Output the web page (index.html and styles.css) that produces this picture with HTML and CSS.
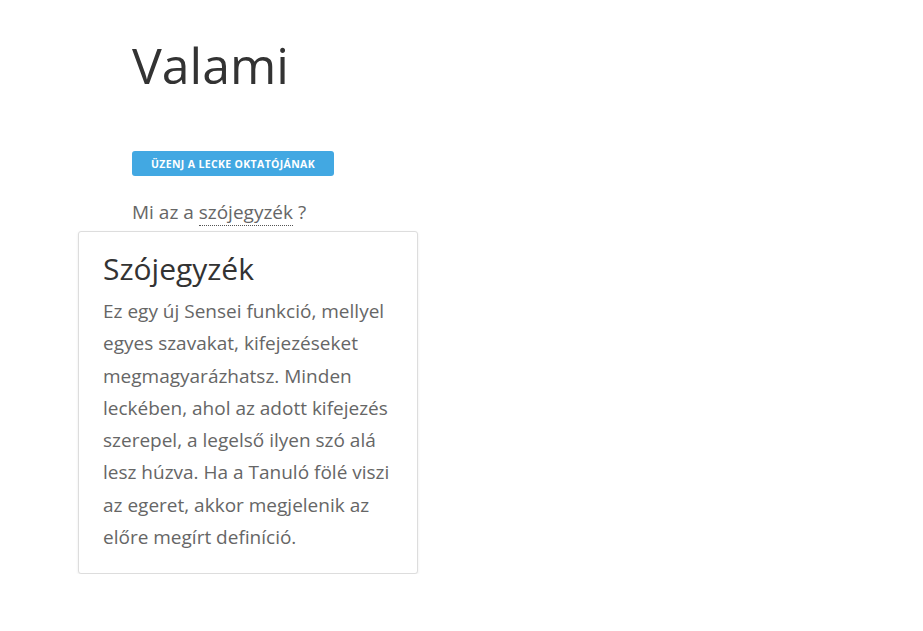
FILE: index.html
```html
<!DOCTYPE html>
<html lang="hu">
<head>
<meta charset="utf-8">
<link rel="stylesheet" href="styles.css">
</head>
<body>
<div class="page">
  <h1 class="title">Valami</h1>
  <button class="btn">Üzenj a lecke oktatójának</button>
  <p class="question">Mi az a <span class="term">szójegyzék</span> ?</p>
  <div class="tooltip">
    <h2 class="tip-title">Szójegyzék</h2>
    <p class="tip-text">Ez egy új Sensei funkció, mellyel egyes szavakat, kifejezéseket megmagyarázhatsz. Minden leckében, ahol az adott kifejezés szerepel, a legelső ilyen szó alá lesz húzva. Ha a Tanuló fölé viszi az egeret, akkor megjelenik az előre megírt definíció.</p>
  </div>
</div>
</body>
</html>
```
FILE: styles.css
```css
html, body {
  margin: 0;
  padding: 0;
  background: #fff;
}
body {
  font-family: "Open Sans", "Noto Sans", sans-serif;
  color: #333;
}
.page {
  padding: 34px 0 0 132px;
}
.title {
  margin: 0;
  font-size: 50px;
  font-weight: 400;
  line-height: 62px;
  color: #333;
}
.btn {
  display: block;
  margin-top: 55px;
  width: 202px;
  height: 25px;
  border: 0;
  border-radius: 3px;
  background: #42a8e2;
  color: #fff;
  font-family: "Open Sans", "Noto Sans", sans-serif;
  font-size: 10.5px;
  font-weight: 700;
  text-transform: uppercase;
  letter-spacing: 0.35px;
  padding: 0;
}
.question {
  margin: 24px 0 0 0;
  font-size: 19px;
  line-height: 24px;
  color: #666;
}
.term {
  border-bottom: 1px dotted #555;
}
.tooltip {
  box-sizing: border-box;
  width: 340px;
  margin-left: -54px;
  margin-top: 7px;
  border: 1px solid #ddd;
  border-radius: 3px;
  box-shadow: 0 1px 3px rgba(0, 0, 0, 0.08);
  padding: 19px 22px 20px 24px;
  background: #fff;
}
.tip-title {
  margin: 0;
  font-size: 30px;
  font-weight: 400;
  line-height: 36px;
  color: #333;
}
.tip-text {
  margin: 8px 0 0 0;
  font-size: 19px;
  line-height: 32.3px;
  color: #666;
}
```
